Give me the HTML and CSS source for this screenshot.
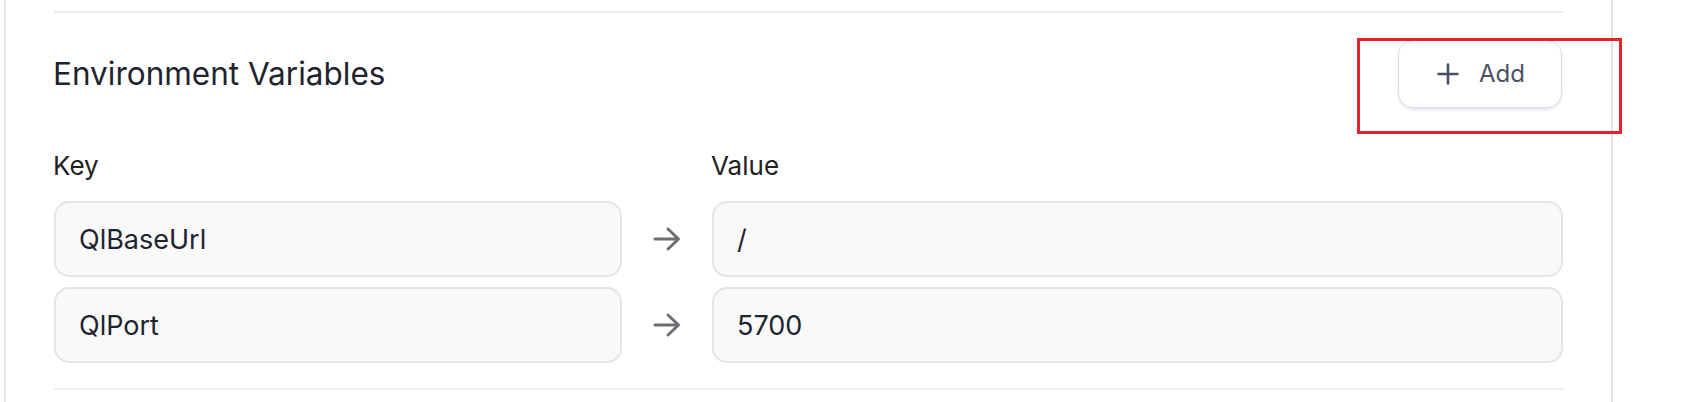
FILE: index.html
```html
<!DOCTYPE html>
<html lang="en">
<head>
    <meta charset="UTF-8" />
    <title>Environment Variables</title>
    <link rel="stylesheet" href="styles.css">
</head>
<body>
    <div class="panel">
        <div class="divider"></div>

        <div class="env-header">
            <h2>Environment Variables</h2>
            <div class="add-wrap">
                <button class="btn-add">
                    <svg width="22" height="22" viewBox="0 0 22 22">
                        <path d="M11 1.5v19M1.5 11h19" stroke="#475063" stroke-width="2.6" stroke-linecap="round" fill="none"/>
                    </svg>
                    <span>Add</span>
                </button>
                <div class="highlight"></div>
            </div>
        </div>

        <div class="env-grid">
            <label>Key</label>
            <span></span>
            <label>Value</label>

            <input type="text" value="QlBaseUrl" readonly />
            <div class="arrow">
                <svg width="28" height="26" viewBox="0 0 28 26">
                    <path d="M2 13h23M15 3l10.5 10L15 23" stroke="#6d6d72" stroke-width="3" stroke-linecap="round" stroke-linejoin="round" fill="none"/>
                </svg>
            </div>
            <input type="text" value="/" readonly />

            <input type="text" value="QlPort" readonly />
            <div class="arrow">
                <svg width="28" height="26" viewBox="0 0 28 26">
                    <path d="M2 13h23M15 3l10.5 10L15 23" stroke="#6d6d72" stroke-width="3" stroke-linecap="round" stroke-linejoin="round" fill="none"/>
                </svg>
            </div>
            <input type="text" value="5700" readonly />
        </div>

        <div class="divider bottom"></div>
    </div>
</body>
</html>
```

FILE: styles.css
```css
body {
    margin: 0;
    font-family: Inter, "Noto Sans", sans-serif;
    color: #1f2330;
    background: #fff;
}
.panel {
    margin-left: 4px;
    width: 1509px;
    height: 402px;
    padding: 11px 48px 0 48px;
    border-left: 2px solid #e6e6e6;
    border-right: 2px solid #e2e2e2;
    box-sizing: content-box;
}
.divider {
    height: 2px;
    background: #ededed;
}
.divider.bottom {
    margin-top: 25px;
}
.env-header {
    display: flex;
    justify-content: space-between;
    align-items: center;
    margin-top: 26px;
    height: 69px;
}
.env-header h2 {
    margin: 0 0 0 -1px;
    font-size: 31.5px;
    font-weight: 400;
    color: #1f2330;
}
.add-wrap {
    position: relative;
    margin-right: 1px;
}
.btn-add {
    display: flex;
    align-items: center;
    justify-content: center;
    gap: 20px;
    width: 164px;
    height: 68px;
    padding: 0 0 0 2px;
    background: #fff;
    border: 1.5px solid #dcdde8;
    border-radius: 15px;
    box-shadow: 0 2px 3px rgba(60, 64, 100, 0.12);
    font-family: Inter, "Noto Sans", sans-serif;
    font-size: 24px;
    color: #4a5163;
    cursor: pointer;
}
.btn-add svg {
    display: block;
}
.highlight {
    position: absolute;
    left: -41px;
    top: -2px;
    width: 259px;
    height: 90px;
    border: 3px solid #e8212b;
}
.env-grid {
    display: grid;
    grid-template-columns: 568px 90px 1fr;
    row-gap: 10px;
    margin-top: 42px;
}
.env-grid label {
    font-size: 26px;
    line-height: 32px;
    color: #222;
    margin-left: -1px;
    margin-bottom: 9px;
}
.env-grid input {
    height: 76px;
    box-sizing: border-box;
    padding: 0 0 0 23px;
    background: #f9f9f9;
    border: 2px solid #e5e5e5;
    border-radius: 15px;
    font-family: Inter, "Noto Sans", sans-serif;
    font-size: 27px;
    color: #1e2430;
    outline: none;
}
.arrow {
    display: flex;
    align-items: center;
    justify-content: center;
}
.arrow svg {
    display: block;
}
```
